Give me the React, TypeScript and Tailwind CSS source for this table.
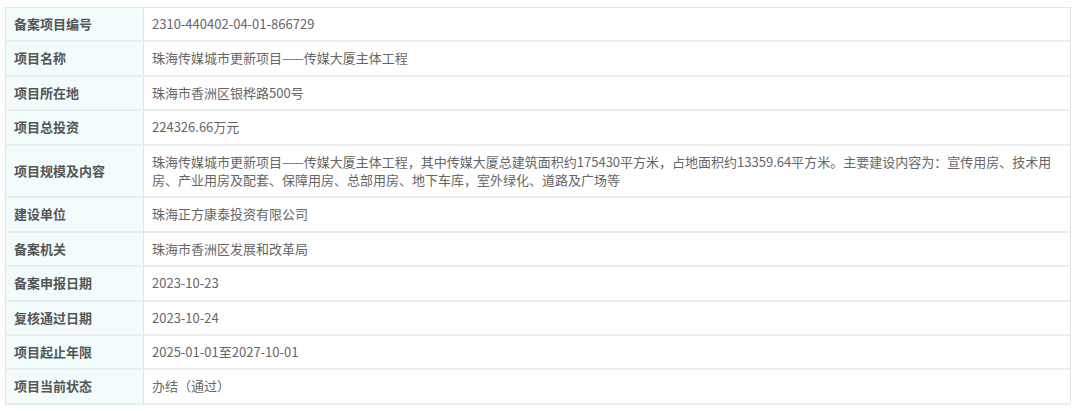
const rows: [string, string][] = [
  ["备案项目编号", "2310-440402-04-01-866729"],
  ["项目名称", "珠海传媒城市更新项目——传媒大厦主体工程"],
  ["项目所在地", "珠海市香洲区银桦路500号"],
  ["项目总投资", "224326.66万元"],
  [
    "项目规模及内容",
    "珠海传媒城市更新项目——传媒大厦主体工程，其中传媒大厦总建筑面积约175430平方米，占地面积约13359.64平方米。主要建设内容为：宣传用房、技术用房、产业用房及配套、保障用房、总部用房、地下车库，室外绿化、道路及广场等",
  ],
  ["建设单位", "珠海正方康泰投资有限公司"],
  ["备案机关", "珠海市香洲区发展和改革局"],
  ["备案申报日期", "2023-10-23"],
  ["复核通过日期", "2023-10-24"],
  ["项目起止年限", "2025-01-01至2027-10-01"],
  ["项目当前状态", "办结（通过）"],
];

export default function App() {
  return (
    <div className="w-[1080px] h-[411px] bg-white pt-[7px] pl-[5px] font-['Microsoft_YaHei','Noto_Sans_CJK_SC',sans-serif] text-[13px]">
      <table className="w-[1066px] border-collapse border border-[#e3e3e3]">
        <tbody>
          {rows.map(([label, value]) => (
            <tr key={label} className="border-b-2 border-[#ececec]">
              <td className="w-[138px] bg-[#f2fcfd] border-r border-[#e3e3e3] pl-[8px] py-[7px] leading-[18.4px] font-bold text-[#555]">
                {label}
              </td>
              <td className="px-[8px] py-[7px] leading-[18.4px] text-[#666]">{value}</td>
            </tr>
          ))}
        </tbody>
      </table>
    </div>
  );
}
